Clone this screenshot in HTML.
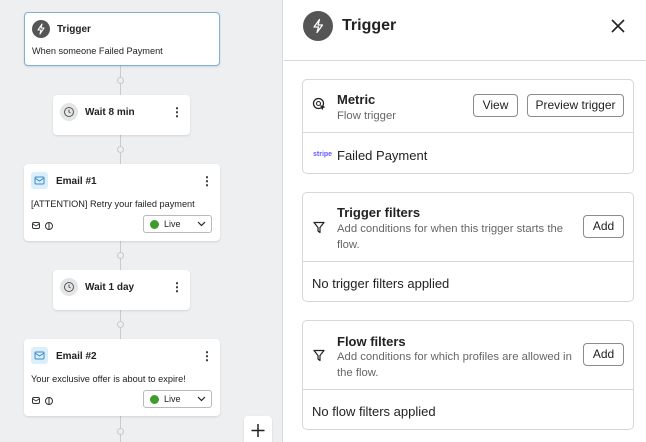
<!DOCTYPE html><html><head><style>
*{box-sizing:border-box;margin:0;padding:0}
html,body{width:646px;height:442px;overflow:hidden}
body{font-family:"Liberation Sans",sans-serif;color:#222;position:relative;background:#fff}
.a{position:absolute}
.left{left:0;top:0;width:283px;height:442px;background:#eeeff1;border-right:1px solid #d8d9dc}
.card{position:absolute;background:#fff;border-radius:4px;box-shadow:0 1px 2px rgba(0,0,0,.12)}
.line{position:absolute;left:120px;width:1px;background:#c9cacd}
.dot{position:absolute;left:117px;width:7px;height:7px;border-radius:50%;background:#eeeff1;border:1px solid #c9cacd}
.b{font-weight:bold;font-size:10px}
.s{font-size:9.2px}
.ic{position:absolute;width:18px;height:18px;border-radius:50%;background:#e4e5e7}
.ei{position:absolute;width:17px;height:17px;border-radius:3px;background:#dbeefa}
.dots{position:absolute;font-weight:bold;font-size:12px;line-height:12px;width:4px}
.live{position:absolute;left:119px;width:69px;height:18px;border:1px solid #b9babd;border-radius:3px;font-size:9px;line-height:16px;padding-left:20px}
.rc{position:absolute;left:302px;width:332px;border:1px solid #d6d7da;border-radius:5px}
.btn{position:absolute;border:1px solid #8a8b8e;border-radius:4px;font-size:12px;text-align:center;line-height:21px;height:23px;color:#222}
.t{font-size:13px;font-weight:bold;position:absolute}
.d{font-size:11.3px;color:#666;position:absolute;line-height:16px;width:240px}
.n{font-size:13px;position:absolute}
</style></head><body>
<div class="a left">
<div class="line" style="top:65px;height:377px"></div>
<div class="dot" style="top:77px"></div><div class="dot" style="top:146px"></div><div class="dot" style="top:252px"></div><div class="dot" style="top:321px"></div><div class="dot" style="top:428px"></div>
<div class="card" style="left:24px;top:12px;width:196px;height:54px;border:1px solid #7fb0d8">
 <div class="a" style="left:7px;top:7px;width:18px;height:18px;border-radius:50%;background:#555"><svg width="18" height="18" viewBox="0 0 18 18"><path d="M10 4L6 10h3l-1 4 4-6H9z" fill="none" stroke="#fff" stroke-width="1.1" stroke-linejoin="round"/></svg></div>
 <div class="a b" style="left:32px;top:11px">Trigger</div>
 <div class="a s" style="left:7px;top:33px">When someone Failed Payment</div>
</div>
<div class="card" style="left:53px;top:95px;width:137px;height:40px">
 <div class="ic" style="left:7px;top:8px"><svg width="18" height="18"><circle cx="9" cy="9" r="4.5" fill="none" stroke="#555" stroke-width="1"/><path d="M9 6.5V9l1.5 1" fill="none" stroke="#555"/></svg></div>
 <div class="a b" style="left:32px;top:12px">Wait 8 min</div><div class="dots" style="left:118px;top:11px">⋮</div>
</div>
<div class="card" style="left:24px;top:164px;width:196px;height:77px">
 <div class="ei" style="left:7px;top:8px"><svg width="17" height="17"><rect x="4" y="5" width="9" height="7" rx="1" fill="none" stroke="#3a8ccf"/><path d="M4 6l4.5 3 4.5-3" fill="none" stroke="#3a8ccf"/></svg></div>
 <div class="a b" style="left:32px;top:12px">Email #1</div><div class="dots" style="left:177px;top:11px">⋮</div>
 <div class="a s" style="left:7px;top:35px">[ATTENTION] Retry your failed payment</div>
 <svg class="a" style="left:8px;top:57px" width="24" height="10"><rect x="0.5" y="1.5" width="7" height="6" rx="1.5" fill="none" stroke="#333"/><path d="M1 3l3 2 3-2" fill="none" stroke="#333" stroke-width=".8"/><circle cx="17" cy="5" r="3.5" fill="none" stroke="#333"/><path d="M17 1.5v7" stroke="#333"/></svg>
 <div class="live" style="top:51px"><span class="a" style="left:6px;top:4px;width:9px;height:9px;border-radius:50%;background:#3f9b2a"></span>Live<svg class="a" style="right:5px;top:5px" width="9" height="6"><path d="M1 1l3.5 3.5L8 1" fill="none" stroke="#222" stroke-width="1.2"/></svg></div>
</div>
<div class="card" style="left:53px;top:270px;width:137px;height:40px">
 <div class="ic" style="left:7px;top:8px"><svg width="18" height="18"><circle cx="9" cy="9" r="4.5" fill="none" stroke="#555" stroke-width="1"/><path d="M9 6.5V9l1.5 1" fill="none" stroke="#555"/></svg></div>
 <div class="a b" style="left:32px;top:12px">Wait 1 day</div><div class="dots" style="left:118px;top:11px">⋮</div>
</div>
<div class="card" style="left:24px;top:339px;width:196px;height:77px">
 <div class="ei" style="left:7px;top:8px"><svg width="17" height="17"><rect x="4" y="5" width="9" height="7" rx="1" fill="none" stroke="#3a8ccf"/><path d="M4 6l4.5 3 4.5-3" fill="none" stroke="#3a8ccf"/></svg></div>
 <div class="a b" style="left:32px;top:12px">Email #2</div><div class="dots" style="left:177px;top:11px">⋮</div>
 <div class="a s" style="left:7px;top:35px">Your exclusive offer is about to expire!</div>
 <svg class="a" style="left:8px;top:57px" width="24" height="10"><rect x="0.5" y="1.5" width="7" height="6" rx="1.5" fill="none" stroke="#333"/><path d="M1 3l3 2 3-2" fill="none" stroke="#333" stroke-width=".8"/><circle cx="17" cy="5" r="3.5" fill="none" stroke="#333"/><path d="M17 1.5v7" stroke="#333"/></svg>
 <div class="live" style="top:51px"><span class="a" style="left:6px;top:4px;width:9px;height:9px;border-radius:50%;background:#3f9b2a"></span>Live<svg class="a" style="right:5px;top:5px" width="9" height="6"><path d="M1 1l3.5 3.5L8 1" fill="none" stroke="#222" stroke-width="1.2"/></svg></div>
</div>
<div class="card" style="left:244px;top:416px;width:28px;height:30px"><svg width="28" height="28"><path d="M14 8v13M7.5 14.5h13" stroke="#222" stroke-width="1.5"/></svg></div>
</div>
<div class="a" style="left:303px;top:11px;width:30px;height:30px;border-radius:50%;background:#555"><svg width="30" height="30" viewBox="0 0 30 30"><path d="M16.5 8.5L11 16h4.5l-1.5 5.5 5.5-7.5H15z" fill="none" stroke="#fff" stroke-width="1.3" stroke-linejoin="round"/></svg></div>
<div class="a" style="left:342px;top:17px;font-size:16px;font-weight:bold">Trigger</div>
<svg class="a" style="left:610px;top:18px" width="16" height="16"><path d="M2 2l12 12M14 2L2 14" stroke="#222" stroke-width="1.6"/></svg>
<div class="a" style="left:284px;top:60px;width:362px;height:1px;background:#d6d7da"></div>
<div class="rc" style="top:79px;height:95px">
 <svg class="a" style="left:9px;top:17px" width="15" height="15"><circle cx="6.5" cy="6.5" r="5" fill="none" stroke="#222" stroke-width="1.3"/><circle cx="6.5" cy="6.5" r="2" fill="none" stroke="#222" stroke-width="1.1"/><path d="M8 8l5.5 2-2.2 1-1 2.2z" fill="#222"/></svg>
 <div class="t" style="left:34px;top:12px">Metric</div>
 <div class="d" style="left:34px;top:28px">Flow trigger</div>
 <div class="btn" style="left:170px;top:14px;width:45px">View</div>
 <div class="btn" style="left:224px;top:14px;width:97px">Preview trigger</div>
 <div class="a" style="left:0;top:52px;width:100%;height:1px;background:#d6d7da"></div>
 <div class="a" style="left:10px;top:71px;font-size:7px;color:#635bff;font-weight:bold">stripe</div>
 <div class="n" style="left:34px;top:68px">Failed Payment</div>
</div>
<div class="rc" style="top:192px;height:110px">
 <svg class="a" style="left:10px;top:28px" width="12" height="13"><path d="M1 1.5h10L7 6.5v5L5 10V6.5z" fill="none" stroke="#222" stroke-width="1.2" stroke-linejoin="round"/></svg>
 <div class="t" style="left:34px;top:12px">Trigger filters</div>
 <div class="d" style="left:34px;top:28px">Add conditions for when this trigger starts the flow.</div>
 <div class="btn" style="left:280px;top:22px;width:41px">Add</div>
 <div class="a" style="left:0;top:68px;width:100%;height:1px;background:#d6d7da"></div>
 <div class="n" style="left:9px;top:83px">No trigger filters applied</div>
</div>
<div class="rc" style="top:320px;height:110px">
 <svg class="a" style="left:10px;top:28px" width="12" height="13"><path d="M1 1.5h10L7 6.5v5L5 10V6.5z" fill="none" stroke="#222" stroke-width="1.2" stroke-linejoin="round"/></svg>
 <div class="t" style="left:34px;top:13px">Flow filters</div>
 <div class="d" style="left:34px;top:28px">Add conditions for which profiles are allowed in the flow.</div>
 <div class="btn" style="left:280px;top:22px;width:41px">Add</div>
 <div class="a" style="left:0;top:68px;width:100%;height:1px;background:#d6d7da"></div>
 <div class="n" style="left:9px;top:83px">No flow filters applied</div>
</div>
</body></html>
